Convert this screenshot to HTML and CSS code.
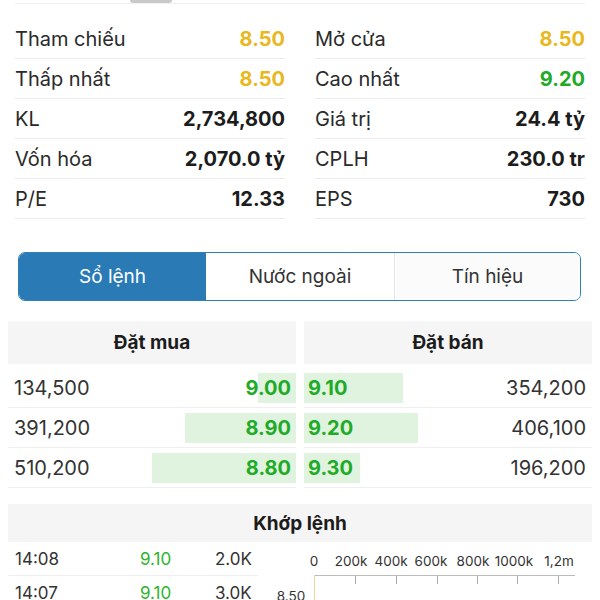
FILE: index.html
```html
<!DOCTYPE html>
<html lang="vi">
<head>
<meta charset="utf-8">
<link rel="stylesheet" href="styles.css">
</head>
<body>
<div class="handle-row"><div class="handle"></div></div>
<div class="stats">
  <div class="stat"><span class="lbl">Tham chiếu</span><span class="val yellow">8.50</span></div>
  <div class="stat"><span class="lbl">Mở cửa</span><span class="val yellow">8.50</span></div>
  <div class="stat"><span class="lbl">Thấp nhất</span><span class="val yellow">8.50</span></div>
  <div class="stat"><span class="lbl">Cao nhất</span><span class="val green">9.20</span></div>
  <div class="stat"><span class="lbl">KL</span><span class="val">2,734,800</span></div>
  <div class="stat"><span class="lbl">Giá trị</span><span class="val">24.4 tỷ</span></div>
  <div class="stat"><span class="lbl">Vốn hóa</span><span class="val">2,070.0 tỷ</span></div>
  <div class="stat"><span class="lbl">CPLH</span><span class="val">230.0 tr</span></div>
  <div class="stat"><span class="lbl">P/E</span><span class="val">12.33</span></div>
  <div class="stat"><span class="lbl">EPS</span><span class="val">730</span></div>
</div>

<div class="tabs">
  <div class="tab active">Sổ lệnh</div>
  <div class="tab">Nước ngoài</div>
  <div class="tab last">Tín hiệu</div>
</div>

<div class="book">
  <div class="side">
    <div class="head">Đặt mua</div>
    <div class="orow buy"><span class="bar" style="width:38px"></span><span class="vol">134,500</span><span class="px">9.00</span></div>
    <div class="orow buy"><span class="bar" style="width:111px"></span><span class="vol">391,200</span><span class="px">8.90</span></div>
    <div class="orow buy"><span class="bar" style="width:144px"></span><span class="vol">510,200</span><span class="px">8.80</span></div>
  </div>
  <div class="side">
    <div class="head">Đặt bán</div>
    <div class="orow sell"><span class="bar" style="width:99px"></span><span class="px">9.10</span><span class="vol">354,200</span></div>
    <div class="orow sell"><span class="bar" style="width:114px"></span><span class="px">9.20</span><span class="vol">406,100</span></div>
    <div class="orow sell"><span class="bar" style="width:56px"></span><span class="px">9.30</span><span class="vol">196,200</span></div>
  </div>
</div>

<div class="match">
  <div class="head wide">Khớp lệnh</div>
  <div class="match-body">
    <div class="trades">
      <div class="trow"><span class="t">14:08</span><span class="p">9.10</span><span class="q">2.0K</span></div>
      <div class="trow"><span class="t">14:07</span><span class="p">9.10</span><span class="q">3.0K</span></div>
    </div>
    <svg class="chart" width="330" height="60" viewBox="0 0 330 60">
      <g font-family="Inter, sans-serif" font-size="13.5" fill="#333" text-anchor="middle">
        <text x="52" y="24">0</text>
        <text x="89" y="24">200k</text>
        <text x="129" y="24">400k</text>
        <text x="169" y="24">600k</text>
        <text x="211" y="24">800k</text>
        <text x="252" y="24">1000k</text>
        <text x="297" y="24">1,2m</text>
        <text x="29" y="59">8.50</text>
      </g>
      <line x1="52" y1="33.5" x2="313" y2="33.5" stroke="#bbb" stroke-width="1"/>
      <line x1="52.5" y1="33" x2="52.5" y2="60" stroke="#e5d9a0" stroke-width="1"/>
      <g stroke="#aaa" stroke-width="1">
        <line x1="93.5" y1="34" x2="93.5" y2="42"/>
        <line x1="134.5" y1="34" x2="134.5" y2="42"/>
        <line x1="175.5" y1="34" x2="175.5" y2="42"/>
        <line x1="215.5" y1="34" x2="215.5" y2="42"/>
        <line x1="255.5" y1="34" x2="255.5" y2="42"/>
        <line x1="296.5" y1="34" x2="296.5" y2="42"/>
      </g>
    </svg>
  </div>
</div>
</body>
</html>
```
FILE: styles.css
```css
* { box-sizing: border-box; }
html, body {
  margin: 0;
  padding: 0;
  background: #fff;
  font-family: Inter, "Noto Sans", sans-serif;
  color: #222;
}
body { width: 600px; height: 600px; overflow: hidden; }

.handle-row { height: 3px; padding-left: 130px; }
.handle {
  width: 42px;
  height: 3px;
  background: #c9c9c9;
  border-radius: 0 0 4px 4px;
}

.stats {
  margin: 0 15px;
  border-top: 1px solid #f0f0f0;
  padding-top: 15px;
  display: grid;
  grid-template-columns: 1fr 1fr;
  column-gap: 30px;
}
.stat {
  height: 40px;
  border-bottom: 1px solid #ececec;
  display: flex;
  align-items: center;
  justify-content: space-between;
  font-size: 20px;
}
.lbl { color: #2a2a2a; }
.val { font-weight: 700; color: #1c1c1c; }
.yellow { color: #e8b81c; }
.green { color: #1faa28; }

.tabs {
  margin: 33px 19px 0 18px;
  height: 49px;
  display: grid;
  grid-template-columns: 187px 188px 1fr;
  border: 1.5px solid #2f7fb8;
  border-radius: 7px;
  overflow: hidden;
}
.tab {
  display: flex;
  align-items: center;
  justify-content: center;
  font-size: 19px;
  color: #333;
  background: #fff;
}
.tab.active { background: #2a7ab6; color: #fff; }
.tab.last { border-left: 1px solid #e6e6e6; background: #fbfbfb; }

.book {
  margin-top: 20px;
  padding: 0 8px;
  display: grid;
  grid-template-columns: 1fr 1fr;
  column-gap: 8px;
}
.head {
  height: 43px;
  background: #f5f5f5;
  display: flex;
  align-items: center;
  justify-content: center;
  font-weight: 700;
  font-size: 19px;
  color: #1c1c1c;
}
.side .head { margin-bottom: 4px; }
.orow {
  position: relative;
  height: 40px;
  border-bottom: 1px solid #efefef;
  display: flex;
  align-items: center;
  justify-content: space-between;
  font-size: 20px;
}
.orow .bar {
  position: absolute;
  top: 5px;
  height: 30px;
  background: #dff3df;
}
.buy .bar { right: 0; }
.sell .bar { left: 0; }
.orow .vol, .orow .px { position: relative; }
.vol { color: #333; }
.px { color: #1faa28; font-weight: 700; }
.buy { padding: 0 5px 0 6px; }
.sell { padding: 0 6px 0 4px; }

.match { margin-top: 16px; padding: 0 8px; }
.head.wide { height: 38px; }
.match-body { display: flex; }
.trades { width: 250px; }
.trow {
  height: 34px;
  display: grid;
  grid-template-columns: 125px 75px 1fr;
  align-items: center;
  padding-left: 7px;
  font-size: 17px;
  color: #333;
  border-bottom: 1px solid #efefef;
}
.trow .p { color: #2db52d; }
.chart { display: block; margin-left: 4px; }
```
